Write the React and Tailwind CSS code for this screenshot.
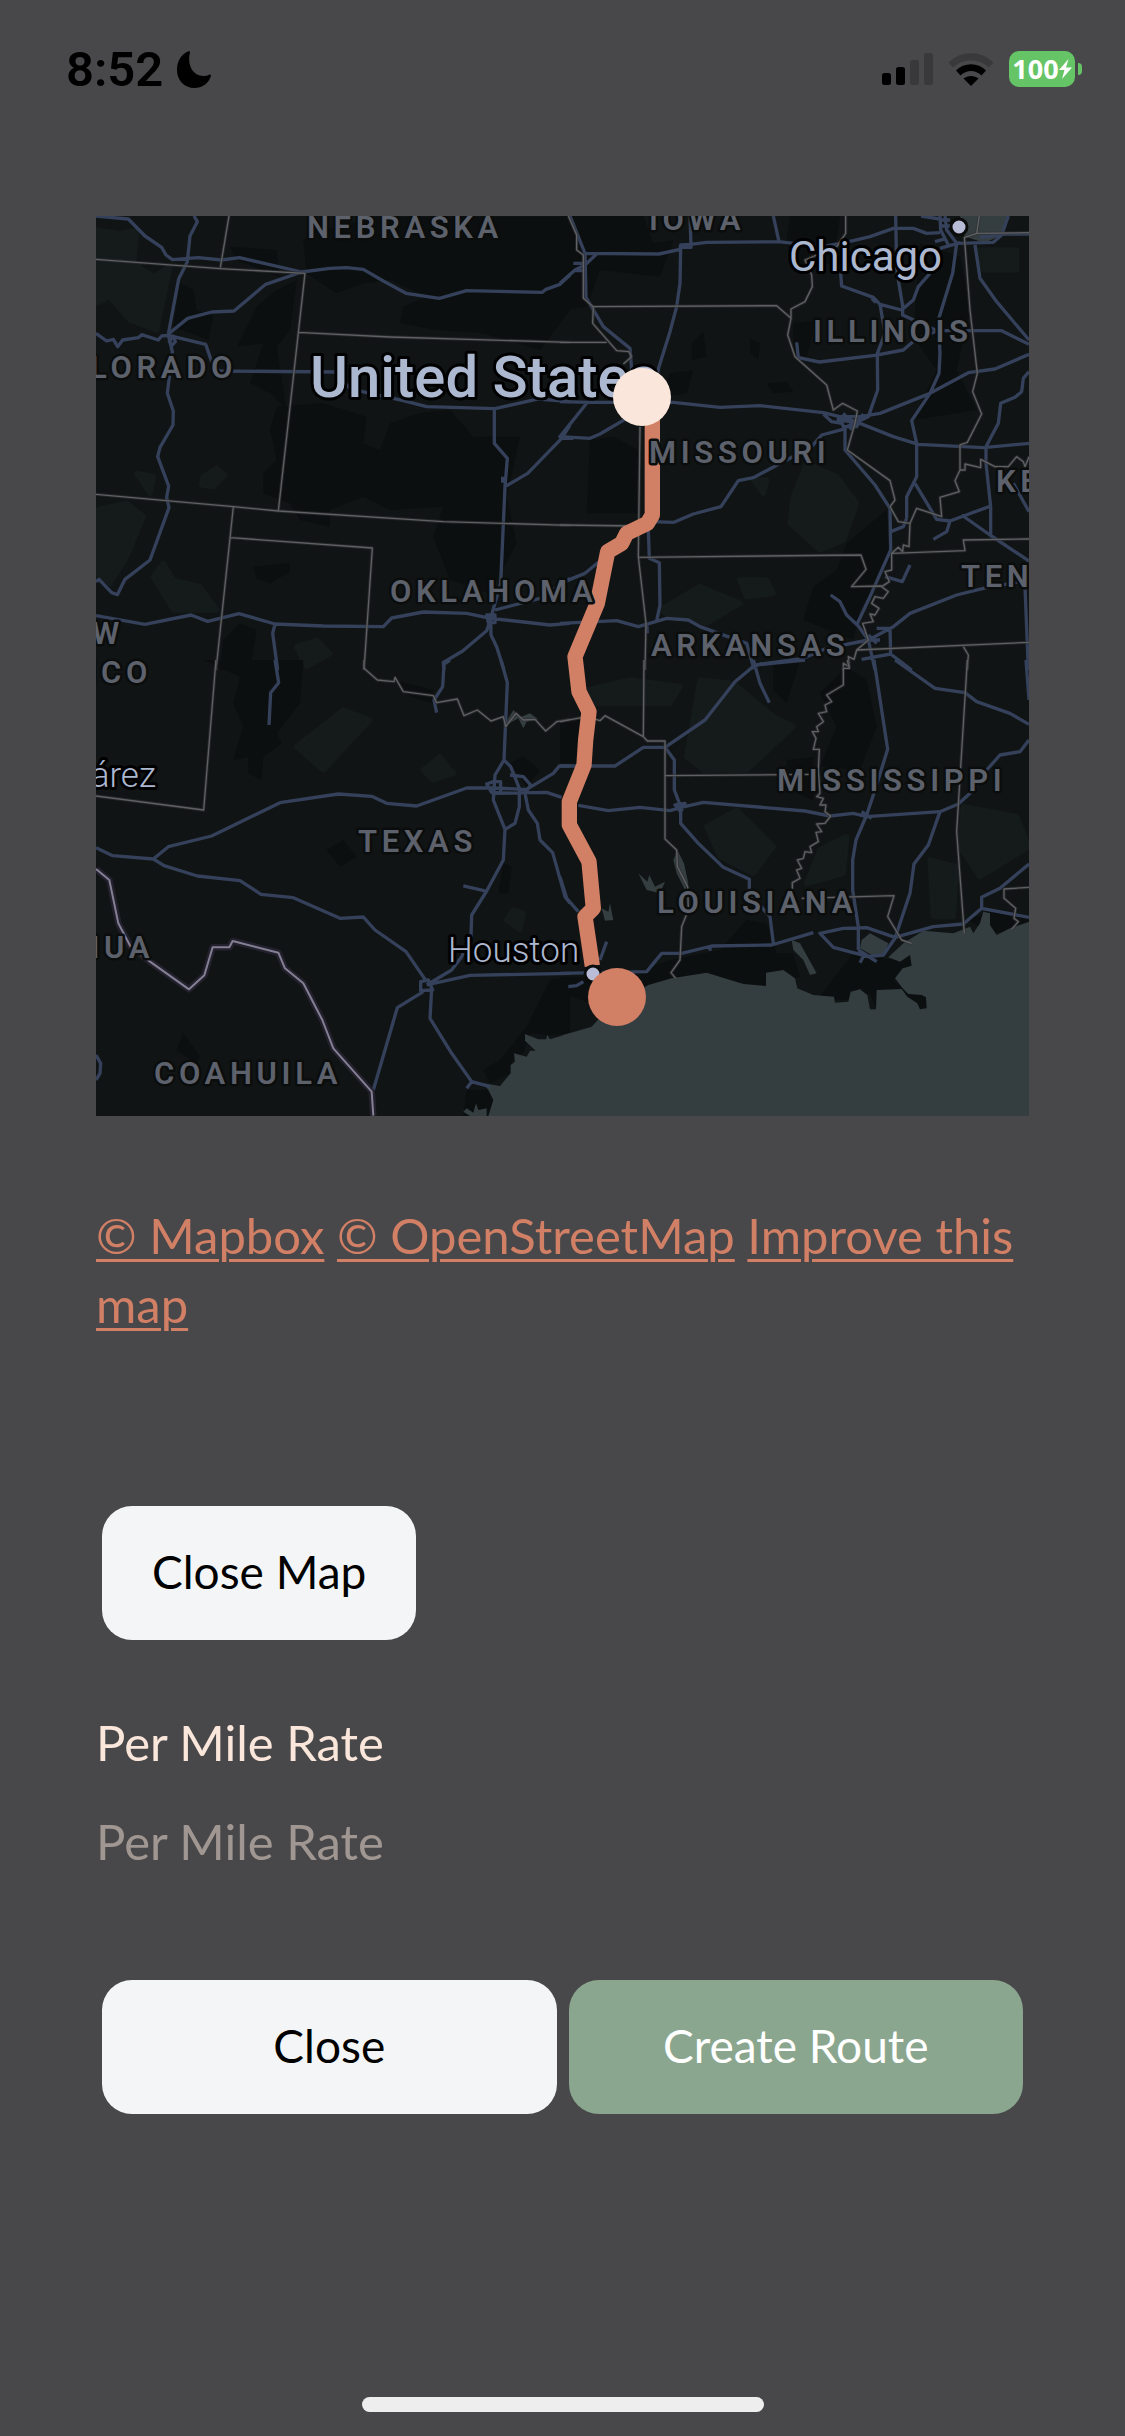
// App.jsx
import { useState } from 'react';

// The map is drawn as four tiles, each in its own 3x coordinate space
const tiles = [
  {
    id: 'nw',
    transform: 'translate(-6 -6) scale(0.33333)',
    dark: [
      'M640 90 L700 60 L860 20 H1440 V300 L1350 420 L1180 370 L1040 360 L930 340 L940 290 L1010 260 L900 210 L820 220 L740 250 L650 190z',
      'M270 220 L310 240 L320 300 L370 320 L355 390 L250 350z',
      'M500 290 L560 240 L620 210 L600 360 L560 410 L590 600 L540 550 L480 520 L520 400 L440 410z',
      'M560 590 L700 580 L830 620 L820 700 L870 720 L900 640 L990 610 L1080 600 L1150 680 H1290 L1250 860 L1280 1000 L1200 1150 L1080 1110 L1030 980 L1060 890 L900 900 L820 860 L720 900 V950 L630 930 L600 880 L520 850 L520 790 L560 750 L540 660z',
      'M490 1070 L600 1060 L600 1085 L540 1120 L500 1105z',
      'M400 1290 L450 1240 L500 1260 L480 1380 H390z',
      'M420 110 L560 120 L570 200 L440 150z',
    ],
    light: [
      'M18 60 L90 70 L140 60 L130 160 L190 200 L240 170 L200 360 L120 330 L60 260 L18 280z',
      'M18 900 L110 880 L160 920 L110 1040 L60 1120 L18 1090z',
      'M140 790 L190 800 L180 850z',
      'M340 800 L380 775 L405 795 L370 830 L335 825z',
      'M190 1100 L220 1060 L250 1110 L330 1130 L380 1200 L250 1200z',
      'M620 1310 L680 1290 L720 1330 L650 1370z',
    ],
    water: [],
    borders: [
      'M18 148 L390 176 L645 190 L565 903',
      'M417 18 L391 173',
      'M625 367 L900 381 L1440 397',
      'M18 853 L430 890 L565 903 L1060 935 L1440 946',
      'M430 890 L378 1380',
      'M422 983 L847 1014 L822 1380',
    ],
    roads: [
      'M18 18 L115 27 L165 78 L215 112 L228 135 L247 149 L325 143 L395 150 L448 143 L635 186 L720 175 L770 173 L820 178 L880 213 L948 250 L1048 265 L1130 242 L1357 247 L1368 238 L1410 223 L1440 195',
      'M312 18 L322 35 L300 78 L292 155 L266 207 L235 372',
      'M635 186 L527 223 L432 303 L365 306 L293 325 L235 372',
      'M18 370 L50 393 L70 388 L83 410 L98 390 L145 383 L155 374 L205 390 L215 378 L235 376 L347 403 L370 470 L390 483 L740 486 L780 535 L830 548 L940 572 L1010 590 L1215 596 L1345 567 L1440 575',
      'M235 376 L247 425 L232 550 L250 603 L249 645 L210 712 L203 740 L236 828 L230 862 L237 893 L180 1050 L105 1108 L82 1154 L65 1148 L27 1108 L18 1115',
      'M250 378 L256 395 L246 406 L238 395z',
      'M1213 596 L1213 700 L1252 745 L1245 830 L1232 1120 L1202 1225 L1190 1262 L1118 1323 L1060 1357 L1062 1380',
      'M1238 800 V818 M1245 830 L1313 790 L1415 685 L1440 645 M1415 685 H1450',
      'M18 1217 L165 1243 L303 1215 L353 1234 L447 1211 L555 1242 L700 1248 L880 1250 L905 1224 L1000 1206 L1130 1210 L1202 1225 L1380 1245 L1440 1240',
      'M555 1242 L548 1270 L563 1380',
      'M1202 1225 L1203 1275 L1220 1310 L1242 1380',
      'M1215 1200 L1350 1165 L1440 1105',
      'M1190 1215 H1215 V1238 H1195z',
    ],
  },
  {
    id: 'ne',
    transform: 'translate(464 -6) scale(0.33333)',
    dark: [
      'M0 18 H250 L280 100 L340 90 L300 200 L120 180 L80 290 L0 300z',
      'M90 690 L160 680 L235 720 V910 L80 910z',
      'M690 18 H840 L820 160 L700 170 L680 90z',
      'M1080 100 L1200 140 L1230 300 L1190 480 L1250 600 L1060 630 L1130 480 L1060 380z',
      'M860 1000 L980 900 L990 1050 L900 1200 L880 1290 L730 1230 L760 1130 L830 1080z',
      'M395 400 L430 365 L440 440 L395 450z',
      'M570 385 L600 400 L595 450 L570 430z',
      'M620 520 L680 515 L700 545 L640 550z',
      'M300 560 L330 490 L400 480 L380 550z',
      'M700 340 L770 330 L740 440 L700 430z',
    ],
    light: [
      'M700 860 L740 760 L830 800 L890 880 L850 990 L780 1020 L690 940z',
      'M300 1200 L420 1130 L540 1180 L440 1240 L340 1220z',
      'M540 1110 L620 1110 L640 1150 L560 1160z',
      'M580 810 L620 810 L610 850z',
      'M1250 120 H1370 V180 L1270 180z',
    ],
    water: ['M1200 18 H1345 L1325 75 L1275 98 L1215 80z'],
    borders: [
      'M25 18 L50 75 L50 120 L70 135 L70 265 L100 290 L98 340 L170 422 L207 425 L215 440 L190 462',
      'M100 290 L650 287 L693 325 L683 375 L705 440 L800 525 L820 600 L848 580 L892 603 L885 640 L862 720 L990 812 L1005 870 L990 890 L1015 935 L1050 940 L1047 1010 L1030 1005 L1028 1025 L1015 1012 L995 1030 L995 1080 L975 1085 L988 1115 L965 1130 L985 1145 L970 1165 L945 1160 L935 1180 L957 1195 L945 1215 L930 1212 L940 1235 L908 1240 L925 1290 L890 1320 L882 1348 L865 1340 L868 1370 L850 1360 L850 1380',
      'M693 325 L693 297 L735 275 L757 230 L755 195 L735 150 L830 110 L857 70 V18',
      'M1213 80 L1230 300 L1252 490 L1238 545 L1265 612 L1222 697 L1200 705 L1200 780 L1215 780 L1215 762 L1262 773 L1262 748 L1305 770 L1345 770 L1370 740 L1390 755 L1395 770 L1407 740',
      'M1200 780 L1185 812 L1198 845 L1140 862 L1145 920 L1070 895 L1050 940',
      'M0 397 L140 397',
      'M1258 18 L1250 70 L1215 82 M1250 70 L1407 68',
      'M240 650 L235 1040 L258 1240 L255 1380',
      'M0 945 L230 948',
      'M235 1042 L903 1035 L918 1078 L875 1130 L965 1128',
      'M995 1030 L1215 1022 L1210 990 L1407 987',
      'M890 1320 L1407 1297',
      'M1210 1310 L1225 1335 L1222 1380',
    ],
    roads: [
      'M30 18 L75 130 L78 262 L130 350 L210 415 L215 480',
      'M75 130 L297 132 L360 118 L362 105 L392 103 L440 97 L655 95 L790 110 L880 92 L930 80 L1000 55 L1060 55 L1100 70 L1140 68',
      'M0 220 L45 180 L75 165 L112 130 M40 160 H72 M42 182 H75',
      'M390 18 L393 112 L362 112 L360 220 L350 290 L330 365 L297 470 L290 500',
      'M640 18 L657 95',
      'M1007 18 L1010 180 L1030 300',
      'M1083 18 L1140 27',
      'M1190 100 L1178 190 L1135 330 L1140 430 L1137 490 L1110 550 L1055 632 L1070 700 L1070 800 L1040 860 L1040 925',
      'M842 190 L845 228 L940 262 L960 283 L1025 300 L1060 270 L1075 230 L1110 190',
      'M935 265 L948 278 M960 283 L975 370 L952 430 L953 540 L925 620 L860 650',
      'M710 397 L715 443 L778 456 L945 436 L1030 420 L1065 390 L1132 362 L1325 362 L1407 403',
      'M1028 280 V315 L1132 362',
      'M1245 105 L1260 205 L1310 275 L1407 390',
      'M1407 433 L1305 477 L1225 488 L1110 550 L960 610 L900 620',
      'M0 575 L90 577 L340 577 L480 592 L600 587 L790 608 L860 625 L900 640 L1000 680 L1075 703 L1270 713 L1407 700',
      'M790 612 L815 635 L845 640 M840 620 H905 L890 650 H850z M850 610 L885 655 M910 612 L870 660 M830 628 L900 640',
      'M80 580 L0 680 L90 685 L120 672 L200 625',
      'M1407 485 L1390 505 L1385 545 L1365 562 L1322 580 L1315 640 L1278 710 L1278 760 L1292 890 L1292 975',
      'M860 655 L785 675 L755 710 L670 755 L580 803 L535 812 L483 890 L400 912 L342 937 L275 935',
      'M855 650 L855 720 L945 825 L990 895 L992 1020 L930 1160 L890 1245',
      'M1065 820 L1130 928 L1170 933 L1292 888 M1205 915 L1290 975 L1407 1053',
      'M1170 933 L1160 965 L1120 988',
      'M992 965 L1030 950 L1040 925',
      'M812 1155 L840 1175 L860 1215 L895 1248 L925 1290',
      'M975 1100 L1027 1115 L1050 1065',
      'M1407 1110 L1270 1135 L1190 1155 L1050 1210 L1000 1250 L925 1290 L800 1315 L730 1345 L600 1363',
      'M0 1240 L170 1232 L235 1250 L320 1225 L385 1230 L420 1250 L560 1300 L580 1370',
      'M262 1270 L260 1240 M265 960 L268 1045 L298 1058 L300 1185 L290 1232',
      'M0 1120 L75 1090 L130 1045',
      'M925 1275 L950 1300 M950 1255 H990 L992 1332 L1055 1380 M925 1290 L945 1380 M905 1348 L992 1332 M930 1290 H960',
      'M1360 820 L1407 905',
      'M1395 1130 L1405 1380',
      'M1140 18 L1142 60 L1165 105 M1155 18 L1160 60 L1190 100 L1300 97 L1325 75 L1345 18 M1142 30 H1170 M1142 48 H1172 M1125 95 L1160 85 M1140 115 L1200 98 M1260 82 L1335 72 H1407',
    ],
  },
  {
    id: 'sw',
    transform: 'translate(-6 444) scale(0.33333)',
    dark: [
      'M340 0 H640 L630 130 L560 220 L575 250 L520 290 L515 360 L475 340 V290 L430 300 L460 200 L430 130 L450 50z',
      'M910 60 L1030 90 L1030 130 L960 110z',
      'M1260 310 L1300 290 L1350 330 L1310 380z',
      'M1240 610 L1265 620 L1255 700 L1225 700z',
      'M1380 960 L1440 950 V1120 L1370 1125 L1320 1120 L1300 1180 L1270 1190 L1260 1240 L1200 1270 L1180 1230 L1230 1200 L1310 1100z',
      'M1130 1290 L1220 1290 L1200 1368 L1120 1368z',
      'M260 1170 L280 1120 L330 1190 L320 1210z',
      'M710 570 L760 540 L800 590 L750 620z',
    ],
    light: [
      'M1250 780 L1270 750 L1300 760 L1290 810z',
      'M1000 330 L1050 290 L1090 340 L1030 360z',
      'M620 260 L760 150 L840 180 L700 330z',
    ],
    water: [
      'M1195 1368 L1210 1320 L1195 1290 L1180 1270 L1230 1278 L1262 1240 L1262 1215 L1275 1205 L1272 1180 L1310 1190 L1320 1172 L1337 1172 L1305 1142 L1305 1122 L1345 1138 L1368 1138 L1372 1125 L1380 1138 L1440 1120 V1368z',
      'M1120 1355 L1130 1345 L1150 1358 L1158 1330 L1165 1350 L1190 1345 L1190 1368 H1140z',
      'M1240 200 L1270 150 L1290 172 L1320 160 L1345 178 L1310 185 L1300 205 L1285 175z',
    ],
    borders: [
      'M378 0 L341 450 L18 408',
      'M822 0 V25 L862 60 L912 65 L915 52 L940 95 L1030 107 L1040 128 L1102 117 L1122 167 L1162 150 L1203 183 L1240 170 L1247 200 L1278 160 L1300 180 L1335 178 L1367 213 L1400 185 L1440 178',
    ],
    roads: [
      'M555 0 L566 68 L542 98 L537 195',
      'M1080 0 L1062 12 L1058 80 L1032 120 L1040 158',
      'M1233 0 L1252 68 L1242 300',
      'M18 563 L68 587 L190 597 L235 560 L365 528 L570 428 L745 402 L845 409 L890 430 L980 438 L1130 384 L1210 384 L1310 388 L1390 340 L1408 318 H1440',
      'M190 597 L222 617 L322 648 L450 662 L513 703 L610 713 L750 775 L820 771 L855 810 L948 875 L1010 965',
      'M1242 300 L1215 345 L1210 420 L1245 508 L1240 600 L1190 693 L1145 765 L1143 830 L1115 890 L1085 930 L1010 975',
      'M1242 300 L1262 320 L1288 385 L1288 440 L1275 490 L1245 508',
      'M1190 372 L1210 365 H1232 V398 H1205z M1215 400 L1370 397 L1415 412',
      'M1260 345 L1300 350 L1322 375 L1305 400 L1315 450 L1342 490 L1350 540 L1388 578 L1425 710 L1440 730',
      'M1120 678 L1185 693',
      'M992 965 L1015 960 L1028 990 L992 992z M1010 975 L1140 946 L1440 940',
      'M1000 995 L922 1043 L850 1290',
      'M1025 985 L1020 1075 L1085 1180 L1145 1265 L1200 1280 M1145 1265 L1130 1285',
      'M18 1185 L32 1210 L30 1240 L18 1260',
    ],
  },
  {
    id: 'se',
    transform: 'translate(464 444) scale(0.33333)',
    dark: [
      'M780 100 L860 20 L920 60 L950 200 L900 330 L780 320 L830 200z',
      'M640 0 L720 0 L680 130 L640 90z',
      'M0 950 L200 950 L330 900 L480 870 L560 780 L620 790 L650 880 L700 880 L720 950 L600 980 L440 945 L260 980 L160 1050 L0 1000z',
      'M880 880 L1000 900 L1060 880 L1055 920 L1000 960 L1040 1000 L1100 1005 L1100 1050 L950 1050 L930 1000 L870 1020 L770 1020z',
      'M1220 780 L1300 750 L1407 770 V800 L1300 820z',
      'M0 190 L60 180 L60 310 L0 310z',
      'M680 300 L760 290 L760 420 L690 390z',
    ],
    light: [
      'M380 290 L420 60 L520 70 L640 170 L700 200 L560 330 L430 330z',
      'M440 500 L530 450 L640 560 L580 640 L480 590z',
      'M780 570 L860 530 L850 640 L740 670z',
      'M1210 440 L1370 470 L1407 560 L1260 650 L1200 560z',
      'M80 90 L210 60 L360 80 L330 130 L110 130z',
      'M1110 600 L1190 620 L1180 770 L1120 770z',
    ],
    water: [
      'M0 1137 L10 1125 L95 1100 L150 1040 L265 975 L335 955 L440 938 L550 972 L618 978 L618 938 L670 930 L705 955 L712 985 L760 1005 L822 1010 L825 1028 L865 1025 L872 995 L900 988 L922 1005 L930 1048 L948 1048 L950 990 L1025 987 L1042 1010 L1072 1030 L1080 1048 L1100 1045 L1098 1012 L1085 1005 L1045 1002 L1028 985 L1005 955 L1028 925 L1055 917 L1050 885 L1020 905 L985 892 L1030 850 L1090 812 L1180 820 L1230 800 L1240 820 L1260 790 L1270 755 L1290 760 L1290 795 L1310 825 L1350 805 L1407 785 V1368 H0z',
      'M905 840 L930 820 L985 850 L975 878 L940 888 L900 865z',
      'M340 600 L352 570 L372 610 L385 670 L375 690 L350 640z',
      'M235 640 L262 665 L268 645 L285 680 L315 665 L300 700 L260 690z',
      'M695 840 L720 850 L770 940 L750 945 L730 900 L700 870z',
      'M125 745 L145 755 L150 730 L160 780 L135 782z',
    ],
    borders: [
      'M0 185 L80 170 L120 182 L135 167 L250 230 L262 243 L315 243 V537 L350 570 L352 620 L383 680 L385 750 L365 800 L360 900 L333 938 L347 955',
      'M252 0 L250 230',
      'M315 347 L770 343',
      'M862 0 L868 25 L850 25 V75 L800 105 L815 125 L795 135 L800 155 L775 160 L790 185 L770 200 L775 215 L757 215 L768 235 L760 268 H778 L775 330 L780 400 L770 410 L790 415 L780 435 L798 435 L795 455 L812 468 L795 490 L770 492 L785 515 L768 517 L775 545 L750 560 L755 578 L735 575 L730 595 L712 600 L725 625 L710 630 L720 655 L697 668 V690',
      'M725 715 L1002 707 L983 770 L1025 840 L1055 850',
      'M1222 0 L1190 515 L1213 820',
      'M1407 682 L1332 687 V715 L1367 745 L1362 775 L1375 785 L1355 808',
    ],
    roads: [
      'M735 0 L585 15 L525 65 L435 180 L315 262 L250 262 L165 318 L0 318',
      'M580 0 L600 70 L628 128 M575 25 L605 10',
      'M1005 0 L1125 85 L1215 98 L1250 125 L1350 160 L1407 193',
      'M942 0 L983 268 L945 390 L920 465 L888 540 L878 600 V690 L895 800 V870',
      'M1398 0 L1407 120',
      'M1407 240 L1380 275 L1320 285 L1280 330 L1230 400 L1195 432 L1140 455 L920 470 L880 460 L810 468 L735 453 L430 427 L360 443 L330 452 L240 442 L145 452 L55 436',
      'M345 435 L375 430 L362 455z M905 455 L935 475',
      'M315 262 L343 300 V390 L362 440 L362 490 L415 550 L490 622 L568 658 L568 700 L630 770 L640 850',
      'M1140 455 L1105 555 L1062 612 L1050 700 L1005 835 L970 885 L925 890 L820 862 L780 820 L850 805 L920 803 L1005 832 L1120 800 L1210 792 L1265 745 L1265 712 L1320 685 L1407 612',
      'M0 940 L260 935 L305 880 L365 880 L455 858 L635 855 L760 818 M895 870 L950 905 M900 908 L915 880',
      'M1265 745 L1407 772',
      'M25 980 L50 977 L70 965',
      'M0 650 L20 715 L55 755',
      'M140 845 L120 900',
      'M450 855 V872',
    ],
  },
];

const stateLabels = [
  { name: 'NEBRASKA', x: 211, y: 22 },
  { name: 'IOWA', x: 553, y: 14 },
  { name: 'ILLINOIS', x: 717, y: 126 },
  { name: 'MISSOURI', x: 553, y: 247 },
  { name: 'OKLAHOMA', x: 294, y: 386 },
  { name: 'ARKANSAS', x: 555, y: 440 },
  { name: 'KENTUCKY', x: 900, y: 276 },
  { name: 'TENNESSEE', x: 865, y: 371 },
  { name: 'MISSISSIPPI', x: 681, y: 575 },
  { name: 'LOUISIANA', x: 561, y: 697 },
  { name: 'TEXAS', x: 262, y: 636 },
  { name: 'COAHUILA', x: 58, y: 868 },
  { name: 'COLORADO', x: 141, y: 162, anchor: 'end' },
  { name: 'NEW', x: 28, y: 428, anchor: 'end' },
  { name: 'MEXICO', x: 56, y: 467, anchor: 'end' },
  { name: 'CHIHUAHUA', x: 58, y: 742, anchor: 'end' },
];

const mexicoBorder =
  'M18 627 L58 660 L85 790 L122 860 L180 905 L297 988 L343 946 L368 862 L418 862 L428 843 L565 878 L585 925 L640 970 L697 1080 L730 1165 L845 1295 L850 1367';

const route =
  'M277 600 V915 L262 940 L200 970 L185 1000 L143 1025 L112 1180 L45 1340 L57 1445 L87 1505 L77 1590 L72 1665 L28 1775 V1845 L87 1955 L100 2095 L75 2120 L97 2268';

export default function App() {
  const [showMap, setShowMap] = useState(true);
  const [rate, setRate] = useState('');

  return (
    <div className="min-h-screen flex flex-col bg-[#48484a] font-[Lato,'Open_Sans',sans-serif] text-[49px] leading-[69px]">
      <StatusBar />

      <main className="px-24 pt-[84px]">
        {showMap && <RouteMap />}

        <p className="mt-[85px] text-[#d17f65] decoration-[3px]">
          <a href="#mapbox" className="underline underline-offset-[5px]">© Mapbox</a>{' '}
          <a href="#openstreetmap" className="underline underline-offset-[5px]">© OpenStreetMap</a>{' '}
          <a href="#improve" className="underline underline-offset-[5px]">Improve this map</a>
        </p>

        <div className="flex mt-[167px] px-[6px]">
          <Button className="px-[50px] bg-[#f4f5f7] text-black" onClick={() => setShowMap(!showMap)}>
            Close Map
          </Button>
        </div>

        <form onSubmit={e => e.preventDefault()}>
          <label htmlFor="rate" className="block mt-[68px] text-[#fae6da]">Per Mile Rate</label>
          <input
            id="rate"
            value={rate}
            onChange={e => setRate(e.target.value)}
            placeholder="Per Mile Rate"
            className="block w-full h-[69px] mt-[30px] bg-transparent text-[#fae6da] placeholder:text-[#a19792] outline-none"
          />

          <div className="grid grid-cols-2 gap-3 mt-[104px] px-[6px]">
            <Button className="bg-[#f4f5f7] text-black">Close</Button>
            <Button className="bg-[#8ba68e] text-white">Create Route</Button>
          </div>
        </form>
      </main>

      <div className="mt-auto mx-auto mb-6 h-[15px] w-[402px] rounded-full bg-[#eeeeee]" />
    </div>
  );
}

function Button({ className, children, onClick }) {
  return (
    <button type="button" onClick={onClick} className={`h-[134px] pb-1 rounded-[30px] text-[46px] ${className}`}>
      {children}
    </button>
  );
}

function StatusBar() {
  return (
    <header className="h-[132px] pt-[6px] pl-[66px] pr-[43px] flex items-center justify-between">
      <div className="flex items-center gap-[14px]">
        <span className="font-[Roboto,sans-serif] text-[49px] font-semibold text-black">8:52</span>
        <svg viewBox="0 0 34 37" className="w-[34px] h-[37px]" aria-label="Do not disturb">
          <path d="M11.5 0.3 Q13.2 0 13 1.5 C10 13 15 24.500 26 25 Q30 25.200 32.500 23.500 Q34.300 23.200 33.800 25.500 C31 33 25 37 17.500 37 C7 37 0 29 0 19 C0 10 4 3.500 11.500 0.300z" />
        </svg>
      </div>

      <div className="flex items-center gap-[15px]">
        <svg viewBox="0 0 51 32" className="w-[51px] h-8" aria-label="Signal">
          <rect x="0" y="20" width="9" height="12" rx="2.500" />
          <rect x="14" y="14" width="9" height="18" rx="2.500" />
          <rect x="28" y="7" width="9" height="25" rx="2.500" fill="#39393b" />
          <rect x="42" y="0" width="9" height="32" rx="2.500" fill="#39393b" />
        </svg>
        <svg viewBox="0 0 46 33" className="w-[46px] h-[33px]" aria-label="Wi-Fi">
          <path d="M0.500 9.500 C13 -3 33 -3 45.500 9.500 L41 14.500 C31 5 15 5 5 14.500z" fill="#39393b" />
          <path d="M8 17.500 C16 9 30 9 38 17.500 L33.500 22.500 C27.500 16.500 18.500 16.500 12.500 22.500z" />
          <path d="M15.500 25.500 C19.500 22 26.500 22 30.500 25.500 L23 33z" />
        </svg>
        <div className="flex items-center gap-[3px]">
          <div className="w-[66px] h-9 rounded-[10px] bg-[#65c466] flex items-center justify-center text-white">
            <span className="font-[Open_Sans,sans-serif] text-[27px] leading-9 font-bold">100</span>
            <svg viewBox="0 0 13 20" className="w-[13px] h-5" fill="currentColor" aria-label="Charging">
              <path d="M9.500 0 L0 11 H5.500 L3 20 L13 8.500 H7z" />
            </svg>
          </div>
          <div className="w-1 h-3 rounded-r-full bg-[#65c466]" />
        </div>
      </div>
    </header>
  );
}

function RouteMap() {
  return (
    <svg viewBox="0 0 933 900" className="block w-full overflow-hidden bg-[#101414]" role="img" aria-label="Route map">
      {tiles.map(tile => (
        <g key={tile.id} transform={tile.transform} strokeLinejoin="round">
          <path d={tile.light.join(' ')} fill="#151b1b" stroke="#151b1b" strokeWidth="16" />
          <path d={tile.dark.join(' ')} fill="#0c0f0f" />
          <path d={tile.water.join(' ')} fill="#343d40" />
        </g>
      ))}
      {tiles.map(tile => (
        <g key={tile.id} transform={tile.transform} fill="none" strokeLinejoin="round">
          <path d={tile.roads.join(' ')} stroke="#35415b" strokeWidth="10" />
          <path d={tile.borders.join(' ')} stroke="#303134" strokeWidth="10" opacity="0.6" />
          <path d={tile.borders.join(' ')} stroke="#5f6063" strokeWidth="4" />
        </g>
      ))}

      <g transform="translate(-6 444) scale(0.33333)" fill="none" strokeLinejoin="round">
        <path d={mexicoBorder} stroke="#2b2738" strokeWidth="20" opacity="0.7" />
        <path d={mexicoBorder} stroke="#857f93" strokeWidth="6" />
      </g>

      <path
        d={route}
        transform="translate(464 -6) scale(0.33333)"
        fill="none"
        stroke="#d17f65"
        strokeWidth="46"
        strokeLinejoin="round"
      />

      {/* Place names */}
      <g
        className="font-[Roboto,sans-serif] text-[31px] font-semibold tracking-[0.15em]"
        fill="#5c616c"
        stroke="#0b0d0d"
        strokeWidth="5"
        strokeLinejoin="round"
        paintOrder="stroke"
      >
        {stateLabels.map(label => (
          <text key={label.name} x={label.x} y={label.y} textAnchor={label.anchor}>{label.name}</text>
        ))}
      </g>
      <g
        className="font-[Roboto,sans-serif]"
        fill="#acb8d0"
        stroke="#000000"
        strokeWidth="6"
        strokeLinejoin="round"
        paintOrder="stroke"
      >
        <text x="214" y="181" className="text-[58px] font-medium">United States</text>
        <text x="693" y="55" className="text-[42px]">Chicago</text>
        <text x="352" y="746" className="text-[35px] font-light">Houston</text>
        <text x="60" y="571" textAnchor="end" className="text-[35px] font-light">Juárez</text>
      </g>

      <g fill="#b9bcd6" stroke="#0b0d0d" strokeWidth="3">
        <circle cx="863" cy="11" r="8" />
        <circle cx="497" cy="758" r="8" />
      </g>

      {/* Route ends */}
      <circle cx="546" cy="181" r="29" fill="#fae6da" />
      <circle cx="521" cy="781" r="29" fill="#d17f65" />
    </svg>
  );
}
